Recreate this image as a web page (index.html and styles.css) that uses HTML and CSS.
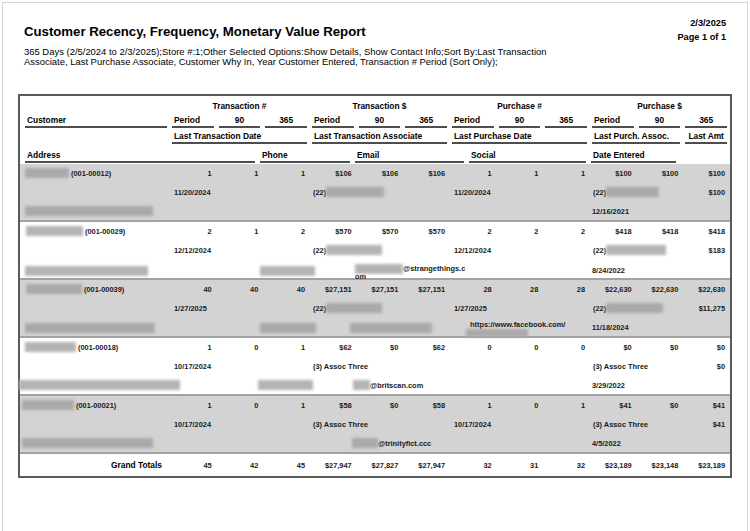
FILE: index.html
```html
<!DOCTYPE html>
<html lang="en">
<head>
<meta charset="utf-8">
<title>Customer Recency, Frequency, Monetary Value Report</title>
<link rel="stylesheet" href="styles.css">
</head>
<body>
<div class="page">
  <header class="report-head">
    <div class="titles">
      <h1 class="title">Customer Recency, Frequency, Monetary Value Report</h1>
      <p class="criteria">365 Days (2/5/2024 to 2/3/2025);Store #:1;Other Selected Options:Show Details, Show Contact Info;Sort By:Last Transaction<br>Associate, Last Purchase Associate, Customer Why In, Year Customer Entered, Transaction # Period (Sort Only);</p>
    </div>
    <div class="meta">
      <div>2/3/2025</div>
      <div>Page 1 of 1</div>
    </div>
  </header>

  <section class="report">
    <div class="grid13 hdr-groups">
      <div class="grp grp-first">Transaction #</div>
      <div class="grp">Transaction $</div>
      <div class="grp">Purchase #</div>
      <div class="grp">Purchase $</div>
    </div>
    <div class="grid13 hdr-row">
      <div class="h">Customer</div>
      <div class="h">Period</div><div class="h c">90</div><div class="h c">365</div>
      <div class="h">Period</div><div class="h c">90</div><div class="h c">365</div>
      <div class="h">Period</div><div class="h c">90</div><div class="h c">365</div>
      <div class="h">Period</div><div class="h c">90</div><div class="h c">365</div>
    </div>
    <div class="grid13 hdr-row hdr-row3">
      <div class="h span3 from2">Last Transaction Date</div>
      <div class="h span3">Last Transaction Associate</div>
      <div class="h span3">Last Purchase Date</div>
      <div class="h span2">Last Purch. Assoc.</div>
      <div class="h c">Last Amt</div>
    </div>
    <div class="contact-hdr hdr-row hdr-row4">
      <div class="h">Address</div>
      <div class="h">Phone</div>
      <div class="h">Email</div>
      <div class="h">Social</div>
      <div class="h">Date Entered</div>
    </div>

    <!-- record 1 -->
    <div class="rec shade first">
      <div class="cell cust"><span class="blur w44"></span>(001-00012)</div>
      <div class="cell num">1</div><div class="cell num">1</div><div class="cell num">1</div>
      <div class="cell num">$106</div><div class="cell num">$106</div><div class="cell num">$106</div>
      <div class="cell num">1</div><div class="cell num">1</div><div class="cell num">1</div>
      <div class="cell num">$100</div><div class="cell num">$100</div><div class="cell num">$100</div>
      <div class="cell lft tdate">11/20/2024</div>
      <div class="cell lft tassoc">(22)<span class="blur w58"></span></div>
      <div class="cell lft pdate">11/20/2024</div>
      <div class="cell lft passoc">(22)<span class="blur w53"></span></div>
      <div class="cell num amt">$100</div>
      <div class="contact">
        <div class="cell"><span class="blur w128"></span></div>
        <div class="cell"></div>
        <div class="cell"></div>
        <div class="cell"></div>
        <div class="cell lft">12/16/2021</div>
      </div>
    </div>

    <!-- record 2 -->
    <div class="rec">
      <div class="cell cust"><span class="blur w57 nudge1"></span>(001-00029)</div>
      <div class="cell num">2</div><div class="cell num">1</div><div class="cell num">2</div>
      <div class="cell num">$570</div><div class="cell num">$570</div><div class="cell num">$570</div>
      <div class="cell num">2</div><div class="cell num">2</div><div class="cell num">2</div>
      <div class="cell num">$418</div><div class="cell num">$418</div><div class="cell num">$418</div>
      <div class="cell lft tdate">12/12/2024</div>
      <div class="cell lft tassoc">(22)<span class="blur w56"></span></div>
      <div class="cell lft pdate">12/12/2024</div>
      <div class="cell lft passoc">(22)<span class="blur w60"></span></div>
      <div class="cell num amt">$183</div>
      <div class="contact">
        <div class="cell"><span class="blur w123"></span></div>
        <div class="cell"><span class="blur w55"></span></div>
        <div class="wrap wrap-email">
          <div class="wl"><span class="blur w48"></span>@strangethings.c</div>
          <div class="wl">om</div>
        </div>
        <div class="cell"></div>
        <div class="cell lft">8/24/2022</div>
      </div>
    </div>

    <!-- record 3 -->
    <div class="rec shade">
      <div class="cell cust"><span class="blur w56 nudge1"></span>(001-00039)</div>
      <div class="cell num">40</div><div class="cell num">40</div><div class="cell num">40</div>
      <div class="cell num">$27,151</div><div class="cell num">$27,151</div><div class="cell num">$27,151</div>
      <div class="cell num">28</div><div class="cell num">28</div><div class="cell num">28</div>
      <div class="cell num">$22,630</div><div class="cell num">$22,630</div><div class="cell num">$22,630</div>
      <div class="cell lft tdate">1/27/2025</div>
      <div class="cell lft tassoc">(22)<span class="blur w56"></span></div>
      <div class="cell lft pdate">1/27/2025</div>
      <div class="cell lft passoc">(22)<span class="blur w57"></span></div>
      <div class="cell num amt">$11,275</div>
      <div class="contact">
        <div class="cell"><span class="blur w130"></span></div>
        <div class="cell"><span class="blur w56"></span></div>
        <div class="cell"><span class="blur w82 pull5"></span></div>
        <div class="wrap wrap-social">
          <div class="wl">https://www.facebook.com/</div>
          <div class="wl"><span class="blur w62 pull4 thin"></span></div>
        </div>
        <div class="cell lft">11/18/2024</div>
      </div>
    </div>

    <!-- record 4 -->
    <div class="rec">
      <div class="cell cust"><span class="blur w51"></span>(001-00018)</div>
      <div class="cell num">1</div><div class="cell num">0</div><div class="cell num">1</div>
      <div class="cell num">$62</div><div class="cell num">$0</div><div class="cell num">$62</div>
      <div class="cell num">0</div><div class="cell num">0</div><div class="cell num">0</div>
      <div class="cell num">$0</div><div class="cell num">$0</div><div class="cell num">$0</div>
      <div class="cell lft tdate">10/17/2024</div>
      <div class="cell lft tassoc">(3) Assoc Three</div>
      <div class="cell lft pdate"></div>
      <div class="cell lft passoc">(3) Assoc Three</div>
      <div class="cell num amt">$0</div>
      <div class="contact">
        <div class="cell"><span class="blur w161 pull6"></span></div>
        <div class="cell"><span class="blur w55 pull2"></span></div>
        <div class="cell"><span class="blur w17 pull2"></span>@britscan.com</div>
        <div class="cell"></div>
        <div class="cell lft">3/29/2022</div>
      </div>
    </div>

    <!-- record 5 -->
    <div class="rec shade">
      <div class="cell cust"><span class="blur w52 pull3"></span>(001-00021)</div>
      <div class="cell num">1</div><div class="cell num">0</div><div class="cell num">1</div>
      <div class="cell num">$58</div><div class="cell num">$0</div><div class="cell num">$58</div>
      <div class="cell num">1</div><div class="cell num">0</div><div class="cell num">1</div>
      <div class="cell num">$41</div><div class="cell num">$0</div><div class="cell num">$41</div>
      <div class="cell lft tdate">10/17/2024</div>
      <div class="cell lft tassoc">(3) Assoc Three</div>
      <div class="cell lft pdate">10/17/2024</div>
      <div class="cell lft passoc">(3) Assoc Three</div>
      <div class="cell num amt">$41</div>
      <div class="contact">
        <div class="cell"><span class="blur w131 pull3"></span></div>
        <div class="cell"></div>
        <div class="cell"><span class="blur w26 pull3"></span>@trinityfict.ccc</div>
        <div class="cell"></div>
        <div class="cell lft">4/5/2022</div>
      </div>
    </div>

    <div class="grid13 totals">
      <div class="cell gt-label">Grand Totals</div>
      <div class="cell num">45</div><div class="cell num">42</div><div class="cell num">45</div>
      <div class="cell num">$27,947</div><div class="cell num">$27,827</div><div class="cell num">$27,947</div>
      <div class="cell num">32</div><div class="cell num">31</div><div class="cell num">32</div>
      <div class="cell num">$23,189</div><div class="cell num">$23,148</div><div class="cell num">$23,189</div>
    </div>
  </section>
</div>
</body>
</html>
```

FILE: styles.css
```css
* { box-sizing: border-box; }

body {
  margin: 0;
  background: #fff;
  color: #000;
  font-family: "Liberation Sans", Arial, sans-serif;
}

.page {
  margin: 2px 2px 0;
  min-height: 540px;
  border: 1px solid #d5d5d5;
  border-bottom: 0;
  padding: 13px 15px 0;
}

.report-head {
  display: flex;
  justify-content: space-between;
  align-items: flex-start;
  padding: 0 6px;
}

.titles { padding-top: 6px; }

.title {
  margin: 0;
  font-size: 13.2px;
  line-height: 19px;
  font-weight: bold;
}

.criteria {
  margin: 6px 0 0;
  font-size: 9.45px;
  line-height: 10px;
}

.meta {
  font-size: 9.2px;
  line-height: 14px;
  font-weight: bold;
  text-align: right;
}

.report {
  margin-top: 27px;
  border: 2px solid #5a5a5a;
}

.grid13 {
  display: grid;
  grid-template-columns: 142px repeat(12, minmax(0, 1fr));
  column-gap: 5px;
  padding: 0 3px 0 5px;
}

.hdr-groups {
  height: 19px;
  line-height: 20px;
  font-size: 8.4px;
  font-weight: bold;
}

.grp { grid-column: span 3; text-align: center; white-space: nowrap; }
.grp-first { grid-column: 2 / span 3; }

.hdr-row {
  font-size: 8.4px;
  font-weight: bold;
  line-height: 11px;
}

.hdr-row .h {
  border-bottom: 2px solid #4e4e4e;
  padding: 0 2px;
  white-space: nowrap;
}

.hdr-row .c { text-align: center; }
.hdr-row3 { margin-top: 3px; }
.hdr-row4 { margin-top: 6px; }

.span3 { grid-column: span 3; }
.span2 { grid-column: span 2; }
.from2 { grid-column: 2 / span 3; }

.contact-hdr {
  display: grid;
  grid-template-columns: 230px 90px 109px 117px 85px;
  column-gap: 5px;
  padding: 0 3px 0 5px;
}

.rec {
  display: grid;
  grid-template-columns: 142px repeat(12, minmax(0, 1fr));
  grid-template-rows: 18px 20px 18px;
  column-gap: 5px;
  padding: 0 3px 0 5px;
  border-bottom: 2px solid #a3a3a3;
  font-size: 7.4px;
  font-weight: bold;
  color: #1a1a1a;
}

.rec.first { margin-top: 1px; }
.shade { background: #d3d3d3; }

.cell {
  display: flex;
  align-items: center;
  white-space: nowrap;
  min-width: 0;
}

.num { justify-content: flex-end; padding-right: 2px; }
.lft { padding-left: 1px; }

.tdate { grid-row: 2; grid-column: 2 / span 3; padding-left: 2px; }
.tassoc { grid-row: 2; grid-column: 5 / span 3; }
.pdate { grid-row: 2; grid-column: 8 / span 3; padding-left: 2px; }
.passoc { grid-row: 2; grid-column: 11 / span 2; }
.amt { grid-row: 2; grid-column: 13; }

.contact {
  grid-row: 3;
  grid-column: 1 / -1;
  display: grid;
  grid-template-columns: 230px 90px 109px 117px 1fr;
  column-gap: 5px;
}

.wrap { line-height: 8px; white-space: nowrap; }
.wrap-email { padding-top: 5px; }
.wrap-social { padding-top: 3px; padding-left: 1px; }
.wl { height: 8px; display: flex; align-items: center; }

.blur {
  display: inline-block;
  flex: none;
  height: 10px;
  background: #b4b4b4;
  filter: blur(1.4px);
}

.shade .blur { background: #a9a9a9; }
.thin { height: 8px; }
.cust .blur { margin-right: 2px; }

.nudge1 { margin-left: 1px; }
.pull2 { margin-left: -2px; }
.pull3 { margin-left: -3px; }
.pull4 { margin-left: -4px; }
.pull5 { margin-left: -5px; }
.pull6 { margin-left: -6px; }

.w17 { width: 17px; }
.w26 { width: 26px; }
.w44 { width: 44px; }
.w48 { width: 48px; }
.w51 { width: 51px; }
.w52 { width: 52px; }
.w53 { width: 53px; }
.w55 { width: 55px; }
.w56 { width: 56px; }
.w57 { width: 57px; }
.w58 { width: 58px; }
.w60 { width: 60px; }
.w62 { width: 62px; }
.w82 { width: 82px; }
.w123 { width: 123px; }
.w128 { width: 128px; }
.w130 { width: 130px; }
.w131 { width: 131px; }
.w161 { width: 161px; }

.totals {
  grid-template-rows: 22px;
  font-size: 7.4px;
  font-weight: bold;
  color: #1a1a1a;
}

.gt-label {
  justify-content: flex-end;
  padding-right: 5px;
  font-size: 8.4px;
  color: #000;
}
```
